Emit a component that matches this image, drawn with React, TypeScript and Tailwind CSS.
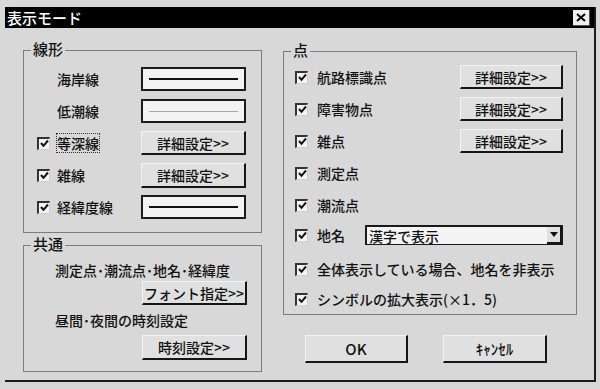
import type { ReactNode } from 'react'

const FONT = "font-['Noto_Sans_CJK_JP','Noto_Sans',sans-serif]"

function Check() {
  return (
    <span className="flex h-[13px] w-[13px] shrink-0 items-center justify-center border-l-2 border-t-2 border-b border-r border-l-[#333] border-t-[#333] border-b-[#cfcfcf] border-r-[#cfcfcf] bg-[#f4f4f4]">
      <svg width="9" height="9" viewBox="0 0 9 9">
        <path d="M1 4 L3.5 6.8 L8 1.5" fill="none" stroke="#111" strokeWidth="2" />
      </svg>
    </span>
  )
}

function Button({ children, className = '' }: { children: ReactNode; className?: string }) {
  return (
    <div
      className={`flex items-center justify-center border-l border-t border-l-[#f2f2f2] border-t-[#f2f2f2] border-b-2 border-r-2 border-b-[#151515] border-r-[#151515] bg-[#e0e0e0] text-[14px] leading-none text-[#111] ${className}`}
    >
      {children}
    </div>
  )
}

function LineBox({ shade }: { shade: 'dark' | 'light' }) {
  return (
    <div className="flex h-[24px] w-[105px] items-center border-2 border-[#1a1a1a] bg-[#f3f3f3] px-[6px]">
      <div className={shade === 'dark' ? 'h-[2px] w-full bg-[#111]' : 'h-px w-full bg-[#a8a8a8]'} />
    </div>
  )
}

function Group({ label, className = '', children }: { label: string; className?: string; children: ReactNode }) {
  return (
    <div className={`relative border border-[#7c7c7c] ${className}`}>
      <span className="absolute -top-[12px] left-[7px] bg-[#d8d8d8] px-[2px] text-[15px] leading-[20px]">{label}</span>
      {children}
    </div>
  )
}

function LeftRow({ checked, focus, label, children }: { checked?: boolean; focus?: boolean; label: string; children: ReactNode }) {
  return (
    <div className="flex h-[24px] items-center">
      <div className="flex w-[117px] items-center gap-[7px] pl-[13px]">
        {checked ? <Check /> : <span className="w-[13px]" />}
        <span className={`text-[14px] leading-[18px] ${focus ? 'outline outline-1 outline-dotted outline-[#333]' : ''}`}>{label}</span>
      </div>
      {children}
    </div>
  )
}

function PointRow({ label, detail }: { label: string; detail?: boolean }) {
  return (
    <div className="flex h-[24px] items-center">
      <div className="flex w-[176px] items-center gap-[9px] pl-[11px]">
        <Check />
        <span className="text-[14px] leading-[18px]">{label}</span>
      </div>
      {detail && <Button className="h-[24px] w-[103px]">詳細設定&gt;&gt;</Button>}
    </div>
  )
}

export default function App() {
  return (
    <div className={`h-[389px] w-[600px] bg-[#d8d8d8] pl-[5px] pt-[7px] text-[#111] font-medium ${FONT}`}>
      <div className="flex h-[375px] w-[591px] flex-col border-b-2 border-r-2 border-[#1c1c1c]">
        <div className="flex h-[21px] items-center justify-between bg-black pl-[2px] pr-[4px]">
          <span className="text-[15px] leading-none text-white">表示モード</span>
          <span className="flex h-[16px] w-[17px] items-center justify-center border-b border-r border-[#555] bg-[#f0f0f0]">
            <svg width="10" height="9" viewBox="0 0 10 9">
              <path d="M1 1 L9 8 M9 1 L1 8" stroke="#000" strokeWidth="2" />
            </svg>
          </span>
        </div>

        <div className="flex gap-[21px] pl-[18px] pt-[22px]">
          <div className="flex w-[239px] flex-col gap-[12px]">
            <Group label="線形" className="h-[183px]">
              <div className="flex flex-col gap-[8px] pt-[16px]">
                <LeftRow label="海岸線">
                  <LineBox shade="dark" />
                </LeftRow>
                <LeftRow label="低潮線">
                  <LineBox shade="light" />
                </LeftRow>
                <LeftRow checked focus label="等深線">
                  <Button className="h-[24px] w-[105px]">詳細設定&gt;&gt;</Button>
                </LeftRow>
                <LeftRow checked label="雑線">
                  <Button className="h-[25px] w-[105px]">詳細設定&gt;&gt;</Button>
                </LeftRow>
                <LeftRow checked label="経緯度線">
                  <LineBox shade="dark" />
                </LeftRow>
              </div>
            </Group>

            <Group label="共通" className="h-[127px]">
              <div className="flex flex-col pt-[14px]">
                <span className="pl-[31px] text-[14px] leading-[20px]">測定点･潮流点･地名･経緯度</span>
                <Button className="ml-[118px] mt-px h-[24px] w-[105px]">フォント指定&gt;&gt;</Button>
                <span className="mt-[5px] pl-[31px] text-[14px] leading-[20px]">昼間･夜間の時刻設定</span>
                <Button className="ml-[118px] mt-[5px] h-[25px] w-[105px]">時刻設定&gt;&gt;</Button>
              </div>
            </Group>
          </div>

          <div className="flex w-[294px] flex-col">
            <Group label="点" className="mt-px h-[264px]">
              <div className="flex flex-col pt-[13px]">
                <div className="flex flex-col gap-[8px]">
                  <PointRow label="航路標識点" detail />
                  <PointRow label="障害物点" detail />
                  <PointRow label="雑点" detail />
                  <PointRow label="測定点" />
                  <PointRow label="潮流点" />
                </div>
                <div className="mt-[8px] flex h-[20px] items-center">
                  <div className="flex w-[81px] items-center gap-[9px] pl-[11px]">
                    <Check />
                    <span className="text-[14px] leading-[18px]">地名</span>
                  </div>
                  <div className="flex h-[20px] w-[198px] items-center justify-between border-l-2 border-t-2 border-b border-r border-[#1a1a1a] bg-[#f4f4f4]">
                    <span className="pl-[2px] text-[14px] leading-none">漢字で表示</span>
                    <span className="flex h-[17px] w-[15px] items-center justify-center border-b-2 border-r-2 border-[#151515] bg-[#e0e0e0]">
                      <svg width="8" height="5" viewBox="0 0 8 5">
                        <path d="M0 0 H8 L4 5 Z" fill="#111" />
                      </svg>
                    </span>
                  </div>
                </div>
                <div className="mt-[12px] flex h-[24px] items-center gap-[9px] pl-[11px]">
                  <Check />
                  <span className="text-[14px] leading-[18px]">全体表示している場合、地名を非表示</span>
                </div>
                <div className="mt-[6px] flex h-[24px] items-center gap-[9px] pl-[11px]">
                  <Check />
                  <span className="text-[14px] leading-[18px]">シンボルの拡大表示(×1．5)</span>
                </div>
              </div>
            </Group>

            <div className="mt-[20px] flex gap-[35px] pl-[22px]">
              <Button className="h-[28px] w-[103px] text-[15px]">OK</Button>
              <Button className="h-[28px] w-[104px] text-[15px]">ｷｬﾝｾﾙ</Button>
            </div>
          </div>
        </div>
      </div>
    </div>
  )
}
